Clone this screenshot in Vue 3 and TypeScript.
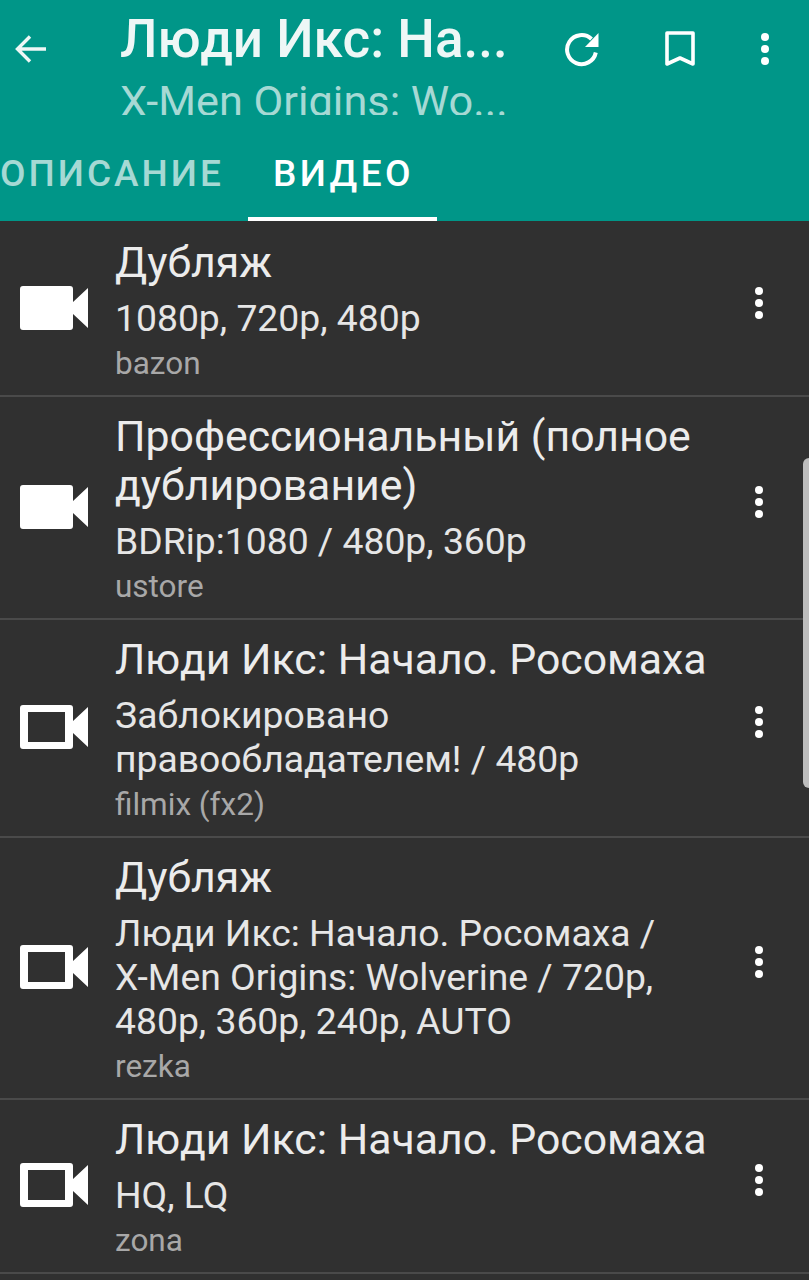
<script setup lang="ts">
interface VideoSource {
  title: string
  details: string
  source: string
  available: boolean
}

const sources: VideoSource[] = [
  { title: 'Дубляж', details: '1080p, 720p, 480p', source: 'bazon', available: true },
  { title: 'Профессиональный (полное дублирование)', details: 'BDRip:1080 / 480p, 360p', source: 'ustore', available: true },
  { title: 'Люди Икс: Начало. Росомаха', details: 'Заблокировано правообладателем! / 480p', source: 'filmix (fx2)', available: false },
  { title: 'Дубляж', details: 'Люди Икс: Начало. Росомаха / X-Men Origins: Wolverine / 720p, 480p, 360p, 240p, AUTO', source: 'rezka', available: false },
  { title: 'Люди Икс: Начало. Росомаха', details: 'HQ, LQ', source: 'zona', available: false },
]
</script>

<template>
  <div class="screen">
    <header class="app-bar">
      <div class="toolbar">
        <svg class="back" viewBox="0 0 36 36" width="36" height="36">
          <path d="M33 18H5M17 5.5 4.5 18 17 30.5" fill="none" stroke="#eef7f6" stroke-width="3.4" />
        </svg>
        <div class="titles">
          <div class="title">Люди Икс: На...</div>
          <div class="subtitle">X-Men Origins: Wo...</div>
        </div>
        <svg class="refresh" viewBox="0 0 36 38" width="36" height="38">
          <path d="M31.8 22.5A14.5 14.5 0 1 1 27.5 9" fill="none" stroke="#fff" stroke-width="4" />
          <path d="M21 17H34.5V3Z" fill="#fff" />
        </svg>
        <svg class="bookmark" viewBox="0 0 30 38" width="30" height="38">
          <path d="M2 3H28V34L15 28 2 34Z" fill="none" stroke="#fff" stroke-width="3.6" stroke-linejoin="round" />
        </svg>
        <div class="dots header-dots"><i></i><i></i><i></i></div>
      </div>
      <nav class="tabs">
        <div class="tab">ОПИСАНИЕ</div>
        <div class="tab active">ВИДЕО</div>
      </nav>
    </header>

    <main class="list">
      <div v-for="item in sources" :key="item.source" class="row">
        <svg class="camera" viewBox="0 0 68 46" width="68" height="46">
          <path
            v-if="item.available"
            d="M3 1H50a3 3 0 0 1 3 3V17L68 3V43L53 29V42a3 3 0 0 1-3 3H3a3 3 0 0 1-3-3V4a3 3 0 0 1 3-3Z"
            fill="#fff"
          />
          <path
            v-else
            fill-rule="evenodd"
            d="M3 1H50a3 3 0 0 1 3 3V17L68 3V43L53 29V42a3 3 0 0 1-3 3H3a3 3 0 0 1-3-3V4a3 3 0 0 1 3-3ZM8 8V38H45V8Z"
            fill="#fff"
          />
        </svg>
        <div class="text">
          <div class="name">{{ item.title }}</div>
          <div class="details">{{ item.details }}</div>
          <div class="origin">{{ item.source }}</div>
        </div>
        <div class="dots"><i></i><i></i><i></i></div>
      </div>
    </main>

    <div class="scrollbar"></div>
  </div>
</template>

<style scoped>
.screen {
  position: relative;
  width: 809px;
  height: 1280px;
  overflow: hidden;
  background: #303030;
  font-family: Roboto, 'Noto Sans', sans-serif;
}

.app-bar {
  height: 221px;
  background: #009688;
  display: flex;
  flex-direction: column;
  justify-content: space-between;
}

.toolbar {
  display: flex;
  align-items: flex-start;
  height: 115px;
  overflow: hidden;
}

.back {
  margin: 31px 0 0 13px;
  flex: none;
}

.titles {
  width: 400px;
  margin-left: 71px;
  flex: none;
}

.title {
  margin-top: 11px;
  font-size: 53px;
  line-height: 56px;
  font-weight: 500;
  color: #eef7f6;
  white-space: nowrap;
}

.subtitle {
  margin-top: 7px;
  font-size: 43.3px;
  line-height: 56px;
  color: #a6d9d4;
  white-space: nowrap;
}

.refresh {
  margin: 30px 0 0 44px;
  flex: none;
}

.bookmark {
  margin: 30px 0 0 65px;
  flex: none;
}

.dots {
  display: flex;
  flex-direction: column;
  gap: 4px;
  flex: none;
}

.dots i {
  width: 8px;
  height: 8px;
  border-radius: 50%;
  background: #fff;
}

.header-dots {
  margin: 33px 0 0 66px;
}

.tabs {
  display: flex;
  height: 106px;
  margin-left: -5px;
}

.tab {
  padding: 37px 24px 0 5px;
  font-size: 37px;
  line-height: 44px;
  font-weight: 500;
  letter-spacing: 3px;
  color: #a6d9d4;
  white-space: nowrap;
}

.tab.active {
  width: 189px;
  box-sizing: border-box;
  padding: 37px 0 0 2px;
  text-align: center;
  letter-spacing: 3.4px;
  color: #fff;
  border-bottom: 4px solid #fff;
}

.list {
  padding-top: 2px;
}

.row {
  display: flex;
  align-items: center;
  border-bottom: 2px solid #4a4a4a;
  padding: 15px 0 9px 20px;
}

.camera {
  flex: none;
  margin-bottom: 8px;
}

.text {
  width: 600px;
  margin-left: 27px;
  flex: none;
}

.name {
  font-size: 42.8px;
  line-height: 49px;
  color: #ececec;
}

.details {
  max-width: 560px;
  margin-top: 9px;
  font-size: 37.3px;
  line-height: 44px;
  color: #e6e6e6;
}

.origin {
  margin-top: 2px;
  font-size: 31.5px;
  line-height: 44px;
  color: #a8a8a8;
}

.row .dots {
  margin-left: 40px;
  margin-bottom: 18px;
}

.scrollbar {
  position: absolute;
  top: 458px;
  right: -6px;
  width: 12px;
  height: 330px;
  border-radius: 6px;
  background: #bdbdbd;
}
</style>
